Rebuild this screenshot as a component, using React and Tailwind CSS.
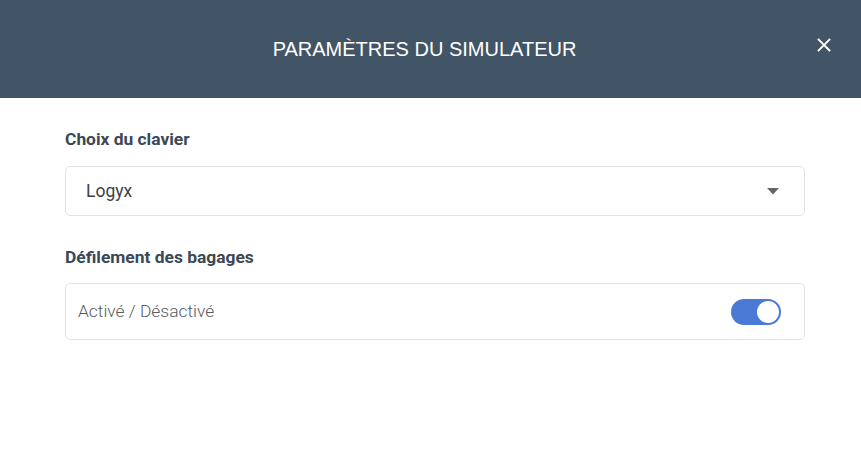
export default function App() {
  return (
    <div className="w-[861px] h-[472px] bg-white overflow-hidden" style={{ fontFamily: 'Roboto, "Liberation Sans", sans-serif' }}>
      <div className="h-[98px] bg-[#425566] relative flex items-center justify-center pr-[12px]">
        <h1 className="text-white text-[20px]" style={{ fontFamily: '"Liberation Sans", Arial, sans-serif' }}>
          PARAMÈTRES DU SIMULATEUR
        </h1>
        <button className="absolute right-[29px] top-[37px] w-4 h-4 flex items-center justify-center">
          <svg width="14" height="14" viewBox="0 0 14 14" fill="none" stroke="white" strokeWidth="1.8" strokeLinecap="square">
            <path d="M1.5 1.5 L12.5 12.5 M12.5 1.5 L1.5 12.5" />
          </svg>
        </button>
      </div>
      <div className="pl-[65px] pr-[56px] pt-[29px]">
        <div className="text-[17.4px] font-bold text-[#3b4855] leading-[24px]">Choix du clavier</div>
        <div className="mt-[15px] h-[50px] border border-[#e3e3e3] rounded-[5px] flex items-center justify-between pl-[20px] pr-[25px]">
          <span className="text-[17.5px] text-[#3a3f45]">Logyx</span>
          <svg width="12" height="7" viewBox="0 0 12 7"><path d="M0 0 H12 L6 6.5 Z" fill="#666" /></svg>
        </div>
        <div className="mt-[29px] text-[17.4px] font-bold text-[#3b4855] leading-[24px]">Défilement des bagages</div>
        <div className="mt-[14px] h-[57px] border border-[#e3e3e3] rounded-[5px] flex items-center justify-between pl-[12px] pr-[23px]">
          <span className="text-[17.4px] font-light text-[#555b61]">Activé / Désactivé</span>
          <div className="w-[50px] h-[26px] rounded-full bg-[#4a7ad6] relative">
            <div className="absolute right-[2px] top-[2px] w-[22px] h-[22px] rounded-full bg-white" />
          </div>
        </div>
      </div>
    </div>
  );
}
